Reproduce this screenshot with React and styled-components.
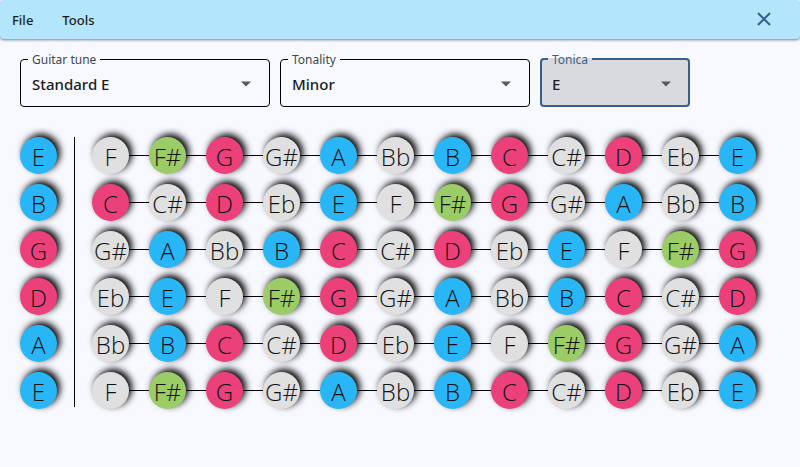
import React, { useState } from "react";
import styled, { createGlobalStyle } from "styled-components";

const GlobalStyle = createGlobalStyle`
  * { box-sizing: border-box; }
  body {
    margin: 0;
    background: #f8f9ff;
    color: #191c20;
    font-family: "Noto Sans", "Open Sans", sans-serif;
  }
`;

const AppBar = styled.header`
  display: flex;
  align-items: center;
  height: 39px;
  padding: 0 20px 0 0;
  border-radius: 4px;
  background: #b3e5fc;
  box-shadow: 0 1px 3px rgba(0, 0, 0, 0.5);
`;

const Menu = styled.nav`
  display: flex;
  flex: 1;
  gap: 5px;
`;

const MenuButton = styled.button`
  padding: 0 12px;
  border: 0;
  background: none;
  color: #191c20;
  font: 500 13px/20px "Noto Sans", sans-serif;
`;

const CloseButton = styled.button`
  display: flex;
  padding: 0 8px 2px;
  border: 0;
  background: none;
  color: #36618e;
`;

const Filters = styled.form`
  display: flex;
  gap: 10px;
  padding: 12px 20px 0;
`;

const Field = styled.fieldset`
  position: relative;
  width: ${(p) => (p.$narrow ? 150 : 250)}px;
  height: 56px;
  min-width: 0;
  margin: 0;
  padding: 0;
  border: ${(p) => (p.$active ? "2px solid #36618e" : "1px solid #000")};
  border-radius: 4px;
  background: ${(p) => (p.$active ? "#d9dadf" : "transparent")};
  color: ${(p) => (p.$active ? "#36618e" : "#43474e")};
`;

const Legend = styled.legend`
  height: 16px;
  margin-left: ${(p) => (p.$active ? 6 : 7)}px;
  padding: 0 4px;
  font-size: 12px;
  line-height: 18px;
`;

const Select = styled.select`
  display: block;
  width: 100%;
  height: 36px;
  padding: 0 36px 2px ${(p) => (p.$active ? 10 : 11)}px;
  border: 0;
  outline: 0;
  appearance: none;
  background: none;
  color: #191c20;
  font: 500 15px/24px "Noto Sans", sans-serif;
`;

const Arrow = styled.svg`
  position: absolute;
  right: ${(p) => (p.$active ? 16 : 17)}px;
  bottom: ${(p) => (p.$active ? 18 : 19)}px;
  pointer-events: none;
`;

const Fretboard = styled.main`
  display: flex;
  align-items: flex-start;
  gap: 17px;
  padding: 30px 20px;
`;

const OpenStrings = styled.div`
  display: grid;
  gap: 10px;
`;

const Nut = styled.div`
  width: 1px;
  height: 270px;
  background: #000;
`;

const Strings = styled.div`
  display: grid;
  gap: 10px;
`;

const StringRow = styled.div`
  display: flex;
  align-items: center;
`;

const Wire = styled.div`
  position: relative;
  z-index: 1;
  width: 20px;
  height: 1px;
  background: #000;
`;

const Note = styled.div`
  width: 37px;
  height: 37px;
  padding-top: 3px;
  border-radius: 50%;
  background: ${(p) => p.$color};
  box-shadow: 3px -3px 7px #000;
  color: #101214;
  font: 300 24px/33px "Open Sans", "Noto Sans", sans-serif;
  text-align: center;
  white-space: nowrap;
`;

const CHROMATIC = ["C", "C#", "D", "Eb", "E", "F", "F#", "G", "G#", "A", "Bb", "B"];
const TUNING = ["E", "B", "G", "D", "A", "E"];
const BLUE = "#29b6f6";
const PINK = "#ec407a";
const GREEN = "#9ccc65";
const GREY = "#e0e0e0";
const COLORS = { E: BLUE, A: BLUE, B: BLUE, G: PINK, C: PINK, D: PINK, "F#": GREEN };

const colorOf = (note) => COLORS[note] || GREY;
const fretsOf = (open) =>
  Array.from({ length: 12 }, (_, i) => CHROMATIC[(CHROMATIC.indexOf(open) + i + 1) % 12]);

function Dropdown({ id, label, options, narrow, active }) {
  const [value, setValue] = useState(options[0]);
  return (
    <Field $narrow={narrow} $active={active}>
      <Legend $active={active}>
        <label htmlFor={id}>{label}</label>
      </Legend>
      <Select id={id} $active={active} value={value} onChange={(e) => setValue(e.target.value)}>
        {options.map((o) => (
          <option key={o}>{o}</option>
        ))}
      </Select>
      <Arrow $active={active} width="12" height="6" viewBox="0 0 12 6" aria-hidden="true">
        <path d="M1 0.5h10L6 5.5z" fill="#55585e" />
      </Arrow>
    </Field>
  );
}

export default function App() {
  return (
    <>
      <GlobalStyle />
      <AppBar>
        <Menu>
          <MenuButton type="button">File</MenuButton>
          <MenuButton type="button">Tools</MenuButton>
        </Menu>
        <CloseButton type="button" aria-label="Close">
          <svg width="16" height="16" viewBox="0 0 16 16" aria-hidden="true">
            <path d="M2 2l12 12M14 2L2 14" stroke="currentColor" strokeWidth="2" />
          </svg>
        </CloseButton>
      </AppBar>
      <Filters>
        <Dropdown id="tune" label="Guitar tune" options={["Standard E"]} />
        <Dropdown id="tonality" label="Tonality" options={["Minor", "Major"]} />
        <Dropdown id="tonica" label="Tonica" options={["E", ...CHROMATIC.filter((n) => n !== "E")]} narrow active />
      </Filters>
      <Fretboard>
        <OpenStrings>
          {TUNING.map((note, i) => (
            <Note key={i} $color={colorOf(note)}>{note}</Note>
          ))}
        </OpenStrings>
        <Nut />
        <Strings>
          {TUNING.map((open, i) => (
            <StringRow key={i}>
              {fretsOf(open).map((note, fret) => (
                <React.Fragment key={fret}>
                  {fret > 0 && <Wire />}
                  <Note $color={colorOf(note)}>{note}</Note>
                </React.Fragment>
              ))}
            </StringRow>
          ))}
        </Strings>
      </Fretboard>
    </>
  );
}
